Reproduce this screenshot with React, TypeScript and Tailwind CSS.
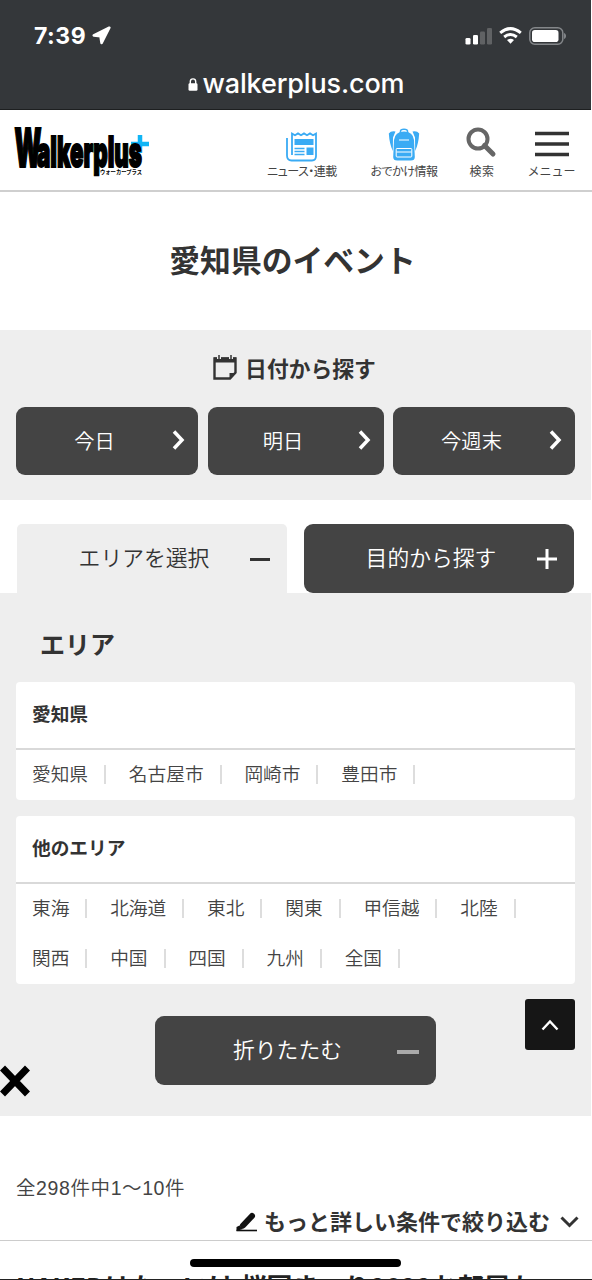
import { useState } from "react";

const AICHI = ["愛知県", "名古屋市", "岡崎市", "豊田市"];
const OTHERS = [
  ["東海", "北海道", "東北", "関東", "甲信越", "北陸"],
  ["関西", "中国", "四国", "九州", "全国"],
];

const StatusBar = () => (
  <div className="mr-px h-[110px] border-b border-[#1d1f20] bg-[#34373a] text-white">
    <div className="flex h-[71px] items-center pr-[24px] pl-[34px]">
      <span className="w-[53px] shrink-0 pt-px font-['Inter'] text-[23px] leading-none font-bold tracking-[0.5px]">7:39</span>
      <svg className="ml-[5px] h-[19px] w-[19px] shrink-0" viewBox="0 0 19 19" fill="currentColor" stroke="currentColor" strokeWidth="2.6" strokeLinejoin="round">
        <path d="M17.3 1.700 1.800 9.500 8.500 10.300 9.600 17Z" />
      </svg>
      <svg className="ml-auto h-[18px] w-[28px]" viewBox="0 0 28 18" fill="currentColor">
        <rect x="0.5" y="11" width="5" height="6.5" rx="1.3" />
        <rect x="8" y="8" width="5" height="9.5" rx="1.3" />
        <rect x="15" y="4.5" width="5" height="13" rx="1.3" fill="#606264" />
        <rect x="22" y="1" width="5" height="16.5" rx="1.3" fill="#606264" />
      </svg>
      <svg className="ml-[6px] h-[17px] w-[23px]" viewBox="0 0 23 17" fill="none" stroke="currentColor" strokeWidth="3">
        <path d="M1.200 5.800Q11.500-2.600 21.800 5.800M5.200 10Q11.500 5 17.800 10" />
        <path d="M8 13q3.500-2.600 7 0l-3.500 3.700Z" fill="currentColor" stroke="none" />
      </svg>
      <svg className="ml-[7px] h-[18px] w-[38px]" viewBox="0 0 38 18" fill="none">
        <rect x="0.8" y="0.8" width="33" height="16.4" rx="5" stroke="#84878a" strokeWidth="1.5" />
        <rect x="3" y="3" width="26.5" height="12" rx="2.8" fill="#fff" />
        <path d="M35.600 6.500q2 2.500 0 5Z" fill="#84878a" stroke="#84878a" />
      </svg>
    </div>
    <div className="flex items-center justify-center pl-px">
      <svg className="mr-[5px] h-[13px] w-[10px]" viewBox="0 0 10 13">
        <path d="M2.300 6V3.600a2.700 2.700 0 0 1 5.400 0V6" fill="none" stroke="#fff" strokeWidth="1.4" />
        <rect x="0.5" y="5.3" width="9" height="7.5" rx="1.3" fill="#fff" />
      </svg>
      <span className="font-['Inter'] text-[27px] leading-[26px] font-medium tracking-[-0.15px]">walkerplus.com</span>
    </div>
  </div>
);

const Logo = () => (
  <svg className="h-[70px] w-[140px] shrink-0" viewBox="0 0 140 70">
    <path d="M130 25v18M121 34h18" stroke="#11b5f5" strokeWidth="4.5" />
    <g fontFamily="Inter, sans-serif" fontWeight="900" stroke="#000">
      <text x="4.5" y="57" fontSize="53" strokeWidth="2.2" textLength="27" lengthAdjust="spacingAndGlyphs">W</text>
      <text x="27" y="57" fontSize="42" strokeWidth="2" textLength="105" lengthAdjust="spacingAndGlyphs">alkerplus</text>
    </g>
    <text x="90" y="64" fontSize="6" fontFamily="Noto Sans CJK JP" fontWeight="700" textLength="42" lengthAdjust="spacingAndGlyphs">ウォーカープラス</text>
  </svg>
);

const NewsIcon = () => (
  <svg className="h-[30px] w-[32px]" viewBox="0 0 32 30" fill="none" stroke="#3aabf4" strokeWidth="1.8">
    <path d="M6 23V1.600l3 1.700 3-1.900 3 1.900 3-1.900 3 1.900 3-1.900 3 1.900 3-1.700V24q0 4.500-4 4.500H5.500q-4.500 0-4.500-5V6" />
    <path d="M8.500 7h19v6h-19Z" fill="#3aabf4" stroke="none" />
    <path d="M8.500 16.500h10M8.500 19.500h10M8.500 22.500h10" strokeWidth="1.4" />
    <path d="M20.500 15.500h7V23h-7Z" fill="#3aabf4" stroke="none" />
  </svg>
);

const BagIcon = () => (
  <svg className="h-[33px] w-[32px]" viewBox="0 0 32 33">
    <path d="M12.500 5V3q0-1.800 3.500-1.800T19.500 3v2" fill="none" stroke="#3aabf4" strokeWidth="1.5" />
    <path d="M.8 5.500Q3 2.500 7.500 3.500L5 9.500 4.800 23Q1.500 16 .8 5.500ZM31.200 5.500Q29 2.500 24.500 3.500L27 9.500 27.200 23Q30.500 16 31.200 5.500Z" fill="#3aabf4" />
    <path d="M6 12Q7 3.500 16 3.500T26 12l.8 17q0 3.500-4 3.500H9.200q-4 0-4-3.500Z" fill="#3aabf4" />
    <path d="M11 12h10M9 20.500h14q.8 0 .8.800V28q0 1-.8 1H9q-.8 0-.8-1v-6.700q0-.8.800-.8ZM8.500 24h15" fill="none" stroke="#fff" />
  </svg>
);

const Header = () => (
  <header className="flex h-[82px] items-start border-b-2 border-[#cfcfcf] pl-[10px] text-[12px] leading-[16px] whitespace-nowrap text-[#444]">
    <Logo />
    <nav className="ml-[106px] flex shrink-0 pt-[16px]">
      <a className="flex w-[92px] flex-col items-center">
        <span className="flex h-[37px] items-center pt-[4px]"><NewsIcon /></span>
        <span className="tracking-[-0.5px] [font-feature-settings:'palt']">ニュース・連載</span>
      </a>
      <a className="flex w-[112px] flex-col items-center">
        <span className="flex h-[37px] items-center pb-px"><BagIcon /></span>
        <span className="tracking-[-0.5px] [font-feature-settings:'palt']">おでかけ情報</span>
      </a>
      <a className="flex w-[44px] flex-col items-center">
        <svg className="h-[37px] w-[32px]" viewBox="0 0 32 37" fill="none" stroke="#666">
          <circle cx="12" cy="13" r="9.5" strokeWidth="4" />
          <path d="m18.500 19.500 8.500 8.500" strokeWidth="5" strokeLinecap="round" />
        </svg>
        <span className="tracking-[0.5px]">検索</span>
      </a>
      <a className="flex w-[95px] flex-col items-center">
        <svg className="h-[37px] w-[34px]" viewBox="0 0 34 37" stroke="#333" strokeWidth="3.7">
          <path d="M0 7.500h34M0 18h34M0 28.500h34" />
        </svg>
        <span>メニュー</span>
      </a>
    </nav>
  </header>
);

const AreaList = ({ items }: { items: string[] }) => (
  <ul className="flex h-[50px] items-center text-[18.7px] font-[350] text-[#444]">
    {items.map((item) => (
      <li key={item} className="mr-[22.8px] flex items-center">
        <span className="pb-[3px]">{item}</span>
        <span className="ml-[16px] h-[19px] w-[2px] bg-[#ddd]" />
      </li>
    ))}
  </ul>
);

const AreaCard = ({ title, rows }: { title: string; rows: string[][] }) => (
  <section className="mb-4 rounded-[4px] bg-white">
    <h3 className="flex h-[68px] items-center border-b-2 border-[#d9d9d9] pb-[3px] pl-4 text-[18.7px] font-bold text-[#333]">
      {title}
    </h3>
    <div className="pl-4">
      {rows.map((row) => (
        <AreaList key={row[0]} items={row} />
      ))}
    </div>
  </section>
);

const App = () => {
  const [open, setOpen] = useState(true);

  return (
    <div className="relative h-[1280px] w-[592px] overflow-hidden bg-white font-['Noto_Sans_CJK_JP',sans-serif] text-[#333]">
      <StatusBar />
      <Header />
      <h1 className="flex h-[138px] items-center justify-center pr-[7px] pb-[3px] text-[30.8px] font-bold">愛知県のイベント</h1>

      {/* 日付から探す */}
      <section className="mr-px h-[170px] bg-[#eee] px-4 pt-[22px]">
        <h2 className="flex h-[32px] items-center justify-center pr-[2px] text-[21.8px] font-bold">
          <svg className="mr-[8px] h-[26px] w-[24px]" viewBox="0 0 24 26">
            <path d="M1.500 3.500h21v14l-5.500 6H1.500Z" fill="none" stroke="#333" strokeWidth="2.4" />
            <path d="M1 2.500h22v5H1Z" fill="#333" />
            <path d="M16.500 24v-6h6.500Z" fill="#333" />
            <path d="M6 0v4M18 0v4" stroke="#eee" strokeWidth="4" />
            <path d="M6 0v4M18 0v4" stroke="#333" strokeWidth="1.5" />
          </svg>
          日付から探す
        </h2>
        <div className="mt-[23px] grid h-[68px] grid-cols-[182px_176px_182px] gap-[9.5px] text-[20.3px] text-white">
          {["今日", "明日", "今週末"].map((label) => (
            <button key={label} className="flex items-center rounded-[9px] bg-[#444] pr-[13px] pb-[2px] font-[350]">
              <span className="flex-1 pl-[1px] text-center">{label}</span>
              <svg className="h-[20px] w-[13px]" viewBox="0 0 13 20" fill="none" stroke="#fff" strokeWidth="3.5">
                <path d="m2 1.500 8 8.500-8 8.500" />
              </svg>
            </button>
          ))}
        </div>
      </section>

      {/* タブ */}
      <div className="mt-6 flex h-[69px] gap-[17px] pl-[17px] text-[21.8px]">
        <button
          onClick={() => setOpen(!open)}
          className="flex w-[270px] items-center rounded-t-[5px] bg-[#eee] pr-[17px] font-[350]"
        >
          <span className="flex-1 pb-[2px] pl-[21px] text-center">エリアを選択</span>
          <span className="mt-px h-[3px] w-[20px] bg-[#333]" />
        </button>
        <button className="flex w-[270px] items-center rounded-[9px] bg-[#444] pr-[17px] font-[350] text-white">
          <span className="flex-1 pb-[2px] pl-[21px] text-center">目的から探す</span>
          <svg className="h-[20px] w-[20px]" viewBox="0 0 20 20" stroke="#fff" strokeWidth="3">
            <path d="M10 0v20M0 10h20" />
          </svg>
        </button>
      </div>

      {open && (
        <section className="mr-px h-[523px] bg-[#eee] px-4">
          <h2 className="flex h-[89px] items-center pt-[12px] pl-[24px] text-[25px] font-bold">エリア</h2>
          <AreaCard title="愛知県" rows={[AICHI]} />
          <AreaCard title="他のエリア" rows={OTHERS} />
          <button
            onClick={() => setOpen(false)}
            className="mt-8 ml-[139px] flex h-[69px] w-[281px] items-center rounded-[9px] bg-[#444] pr-[17px] text-[21.8px] font-[350] text-white"
          >
            <span className="flex-1 pb-[2px] pl-[23px] text-center">折りたたむ</span>
            <span className="mt-[2px] h-[4px] w-[22px] bg-[#aaa]" />
          </button>
        </section>
      )}

      {/* 検索結果 */}
      <p className="mt-[57px] pl-4 font-['Liberation_Sans','Noto_Sans_CJK_JP',sans-serif] text-[19.5px] leading-[31px] font-[350] tracking-[0.6px] text-[#444]">
        全298件中1〜10件
      </p>
      <div className="flex h-[37px] items-center justify-end border-b border-[#ccc] pr-[13px] text-[22px] font-bold">
        <svg className="mr-[6px] h-[20px] w-[22px]" viewBox="0 0 22 20">
          <path d="M.5 18.500H21" stroke="#111" strokeWidth="1.6" />
          <path d="M16 4 7 13.500" stroke="#111" strokeWidth="6" strokeLinecap="round" />
          <path d="M.5 19V15l3-1.500L7 17Z" fill="#111" />
        </svg>
        <span className="pb-[3px]">もっと詳しい条件で絞り込む</span>
        <svg className="ml-[10px] h-[12px] w-[19px]" viewBox="0 0 19 12" fill="none" stroke="#333" strokeWidth="3">
          <path d="m1.500 1.500 8 8 8-8" />
        </svg>
      </div>
      <h2 className="mt-[27px] pl-[16px] text-[26px] leading-[36px] font-bold whitespace-nowrap text-[#222]">
        NAKEDはな・いけ 桜国まつり2022お部屋も
      </h2>

      {/* 画面に重なるもの */}
      <button className="absolute top-[999px] left-[525px] flex h-[51px] w-[50px] items-center justify-center rounded-[3px] bg-[#161616]">
        <svg className="h-[12px] w-[18px]" viewBox="0 0 18 12" fill="none" stroke="#fff" strokeWidth="2.4">
          <path d="m1.500 10.500 7.500-8 7.500 8" />
        </svg>
      </button>
      <svg className="absolute top-[1065px] left-0 h-[32px] w-[30px]" viewBox="0 0 30 32" stroke="#000" strokeWidth="7">
        <path d="m2.500 3 25 26M27.500 3l-25 26" />
      </svg>
      <div className="absolute top-[1259px] left-[190px] h-[8px] w-[211px] rounded-full bg-black" />
      <div className="absolute bottom-0 left-0 h-px w-full bg-[#222]" />
    </div>
  );
};

export default App;
